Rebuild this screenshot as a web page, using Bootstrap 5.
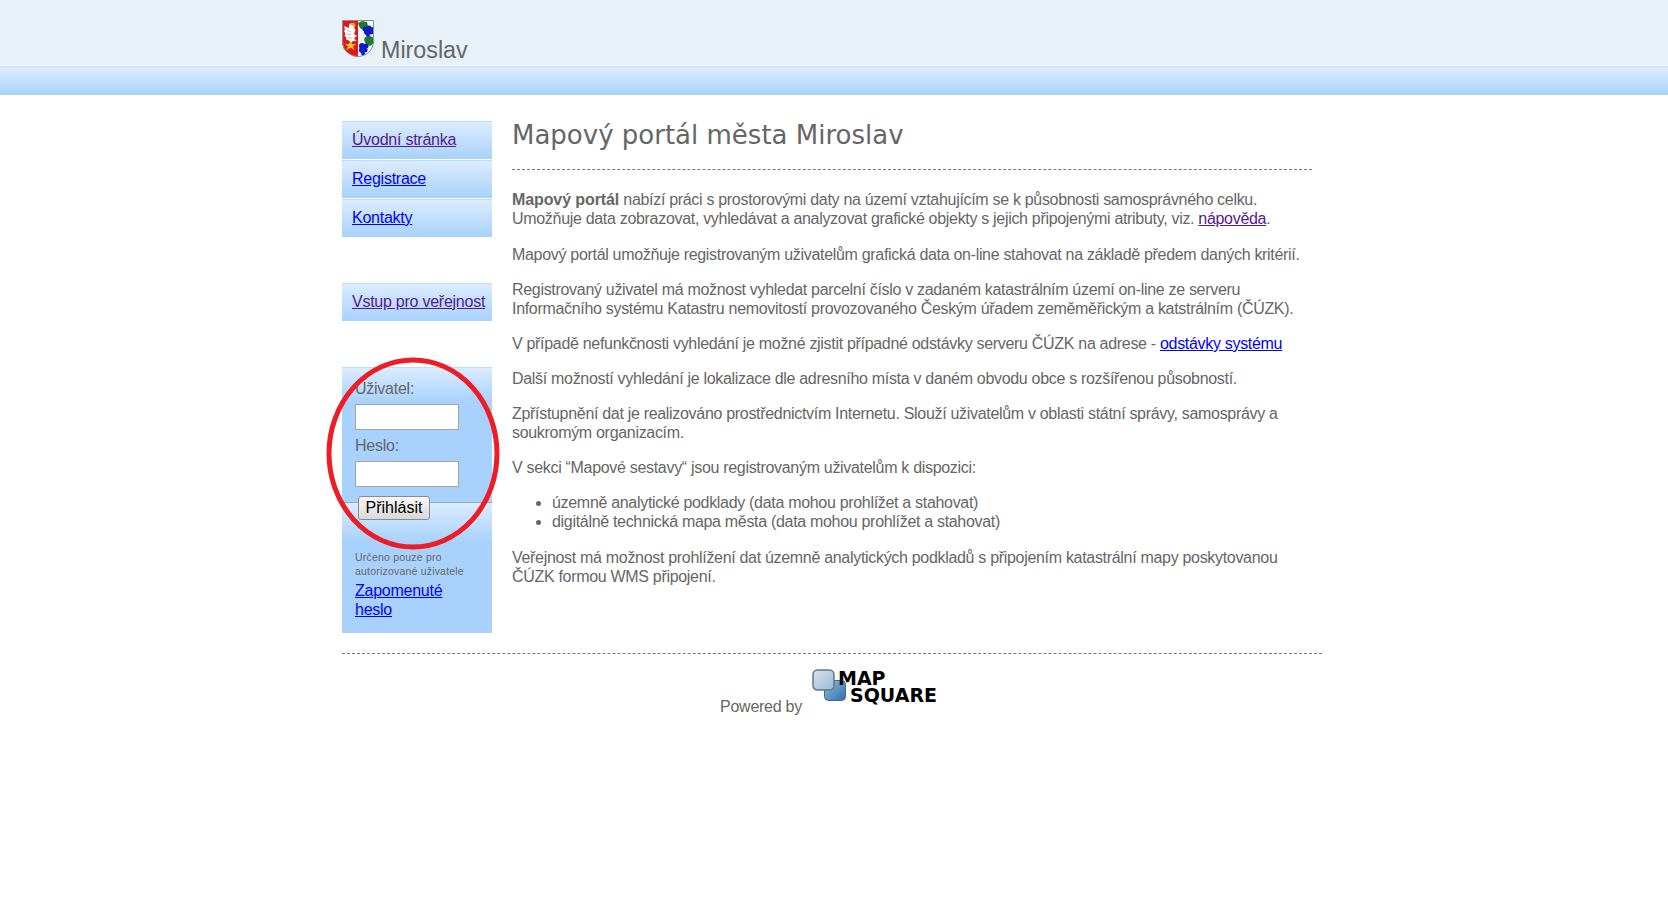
<!DOCTYPE html>
<html lang="cs">
<head>
  <meta charset="UTF-8" />
  <title>Mapový portál města Miroslav</title>
  <link href="https://cdn.jsdelivr.net/npm/bootstrap@5.3.0/dist/css/bootstrap.min.css" rel="stylesheet" />
  <style>
    body { font-family: "Liberation Sans", Arial, sans-serif; font-size: 16px; line-height: 19.2px; letter-spacing: -.25px; color: #666; background: #fff; }
    a { color: #00f; }
    a.seen { color: #551a8b; }
    .top-band { height: 66px; background: #e8f0f8; }
    .top-inner, .page-wrap { width: 984px; }
    .town-name { font-size: 23.300px; line-height: 26px; letter-spacing: 0; color: #666; margin-left: 7px; margin-bottom: 3px; }
    .crest { margin-top: 20px; margin-bottom: 9px; }
    .blue-band { height: 29px; border-top: 1px solid #bcdcfd; background: linear-gradient(#dcecfe, #a8d2fb); box-shadow: 0 -1px 0 #fff; }
    .page-wrap { padding-top: 26px; position: relative; }
    .side-col { width: 150px; }
    .side-link { display: block; height: 38px; margin-bottom: 1px; padding: 8px 0 0 10px; border-top: 1px solid #bcdcfd; background: linear-gradient(#dcecfe, #a8d2fb); white-space: nowrap; }
    .side-gap { margin-top: 46px; }
    .login-box { margin-top: 46px; height: 266px; padding: 11px 13px 0; background: linear-gradient(#dcecfe 0, #a8d2fd 34px, #a8d2fd 100%); border-top: 1px solid #bcdcfd; position: relative; }
    .login-lower { position: absolute; left: 0; right: 0; top: 134px; height: 40px; border-top: 1px solid #9aa6b2; background: linear-gradient(#dcecfe, #a8d2fd); }
    .login-body { position: relative; }
    .login-box label { display: block; margin: 0; }
    .login-box input[type=text] { display: block; width: 104px; height: 26px; margin: 6px 0; border: 1px solid #a5a5a5; background: #fff; padding: 0; }
    .login-btn { display: block; margin: 9px 0 0 3px; width: 72px; height: 24px; padding: 0; font-size: 16px; line-height: 20px; letter-spacing: 0; color: #000; background: linear-gradient(#f8f8f8, #d8d8d8); border: 1px solid #8a8a8a; border-radius: 3px; }
    .login-note { font-size: 10.5px; line-height: 14px; margin-top: 30px; letter-spacing: .2px; }
    .forgot { display: block; margin-top: 4px; line-height: 18.500px; }
    .main-col { width: 800px; margin-left: 20px; line-height: 19.100px; letter-spacing: -.31px; }
    .main-col strong { letter-spacing: -.1px; }
    .main-col h1 { font-family: "DejaVu Sans", Verdana, sans-serif; font-size: 26px; font-weight: 400; line-height: 32px; letter-spacing: 0; color: #666; margin: -2.500px 0 0; padding-bottom: 18.500px; border-bottom: 1px dashed #777; }
    .main-col h1 + p { margin-top: 20.400px; }
    .main-col p { margin: 0 0 16px; }
    .main-col ul { margin: 0 0 16px; padding-left: 40px; }
    .foot-line { margin-top: 20px; width: 980px; border-top: 1px dashed #777; }
    .foot-row { padding-top: 15px; padding-left: 378px; }
    .powered { padding-top: 28px; margin-right: 10px; }
    .ms-logo { position: relative; width: 125px; height: 38px; }
    .ms-word { position: absolute; font-family: "DejaVu Sans", Verdana, sans-serif; font-weight: 700; font-size: 19px; line-height: 20px; letter-spacing: 0; color: #000; }
    .red-ring { position: absolute; left: -17px; top: 260px; }
  </style>
</head>
<body>

<div class="top-band">
  <div class="top-inner mx-auto d-flex align-items-end">
    <svg class="crest" width="32" height="37" viewBox="0 0 32 37">
      <path d="M0 0H16V37C7 36 0 30 0 21Z" fill="#e8141c"/>
      <path d="M16 0H32V21C32 30 25 36 16 37Z" fill="#f4f6f4"/>
      <!-- eagle -->
      <path d="M13 5 L9 3 L7 5 L7 8 L2 6 L3 10 L2 11 L3.500 14 L2.500 15.500 L4.500 18 L4 19.500 L7 20.500 L9 23 L11 21 L14.500 21 L12 18 L15 16 L12 14 L13.500 10 L12 7.500Z" fill="#fff"/>
      <path d="M5 10 L9 12 M5 14 L9 15 M6 17.500 L10 18" stroke="#b8b8b8" stroke-width="1"/>
      <path d="M8 4 L12 2.500 L14 6 L10.500 5.500Z" fill="#f0a020"/>
      <!-- star -->
      <path d="M8.500 21 L10 24 L14 24 L11 26.300 L12.500 30 L8.500 27.800 L4.500 30 L6 26.300 L3 24 L7 24Z" fill="#e8c820"/>
      <!-- vine -->
      <path d="M16 3 L20 1 L25 2 L26 6 L23 10 L19 9 L17 6Z" fill="#1f7a2c"/>
      <path d="M23 17 L28 16 L32 18 L32 23 L28 26 L24 24 L22 20Z" fill="#1f7a2c"/>
      <g fill="#0a1ec8">
        <circle cx="23" cy="9" r="2.500"/><circle cx="27" cy="8" r="2.500"/><circle cx="30" cy="9" r="2"/>
        <circle cx="25" cy="12" r="3"/><circle cx="29" cy="12" r="2.500"/><circle cx="26" cy="15" r="2"/>
        <circle cx="20" cy="26" r="3"/><circle cx="24" cy="26" r="2.500"/><circle cx="20" cy="30" r="3"/>
        <circle cx="23" cy="30" r="2.500"/><circle cx="21" cy="33.500" r="2"/>
      </g>
      <path d="M.5 .5H31.500V21C31.500 30 25 36 16 36.500C7 36 .5 30 .5 21Z" fill="none" stroke="#8a9090" stroke-width="1"/>
    </svg>
    <div class="town-name">Miroslav</div>
  </div>
</div>
<div class="blue-band"></div>

<div class="page-wrap mx-auto">
  <div class="d-flex">
    <div class="side-col">
      <a class="side-link seen" href="#">Úvodní stránka</a>
      <a class="side-link" href="#">Registrace</a>
      <a class="side-link" href="#">Kontakty</a>
      <a class="side-link seen side-gap" href="#">Vstup pro veřejnost</a>
      <form class="login-box">
        <div class="login-lower"></div>
        <div class="login-body">
          <label for="uziv">Uživatel:</label>
          <input type="text" id="uziv" />
          <label for="heslo">Heslo:</label>
          <input type="text" id="heslo" />
          <button type="button" class="login-btn">Přihlásit</button>
          <div class="login-note">Určeno pouze pro autorizované uživatele</div>
          <a class="forgot" href="#">Zapomenuté heslo</a>
        </div>
      </form>
    </div>
    <div class="main-col">
      <h1>Mapový portál města Miroslav</h1>
      <p><strong>Mapový portál</strong> nabízí práci s prostorovými daty na území vztahujícím se k působnosti samosprávného celku. Umožňuje data zobrazovat, vyhledávat a analyzovat grafické objekty s jejich připojenými atributy, viz. <a class="seen" href="#">nápověda</a>.</p>
      <p>Mapový portál umožňuje registrovaným uživatelům grafická data on-line stahovat na základě předem daných kritérií.</p>
      <p>Registrovaný uživatel má možnost vyhledat parcelní číslo v zadaném katastrálním území on-line ze serveru Informačního systému Katastru nemovitostí provozovaného Českým úřadem zeměměřickým a katstrálním (ČÚZK).</p>
      <p>V případě nefunkčnosti vyhledání je možné zjistit případné odstávky serveru ČÚZK na adrese - <a href="#">odstávky systému</a></p>
      <p>Další možností vyhledání je lokalizace dle adresního místa v daném obvodu obce s rozšířenou působností.</p>
      <p>Zpřístupnění dat je realizováno prostřednictvím Internetu. Slouží uživatelům v oblasti státní správy, samosprávy a soukromým organizacím.</p>
      <p>V sekci “Mapové sestavy“ jsou registrovaným uživatelům k dispozici:</p>
      <ul>
        <li>územně analytické podklady (data mohou prohlížet a stahovat)</li>
        <li>digitálně technická mapa města (data mohou prohlížet a stahovat)</li>
      </ul>
      <p>Veřejnost má možnost prohlížení dat územně analytických podkladů s připojením katastrální mapy poskytovanou ČÚZK formou WMS připojení.</p>
    </div>
  </div>
  <div class="foot-line"></div>
  <div class="foot-row d-flex">
    <div class="powered">Powered by</div>
    <div class="ms-logo">
      <svg width="36" height="34" viewBox="0 0 36 34" class="position-absolute top-0 start-0">
        <defs>
          <linearGradient id="msBack" x1="0" y1="0" x2="1" y2="1"><stop offset="0" stop-color="#8fc0e4"/><stop offset="1" stop-color="#2f6fa8"/></linearGradient>
          <linearGradient id="msFront" x1="0" y1="0" x2="1" y2="1"><stop offset="0" stop-color="#d4e4f0"/><stop offset="1" stop-color="#9db8d0"/></linearGradient>
        </defs>
        <rect x="12.500" y="11.500" width="21" height="20" rx="4" fill="url(#msBack)" stroke="#3f6a94"/>
        <rect x="1" y="1" width="21" height="20" rx="4.500" fill="url(#msFront)" stroke="#5f7590" stroke-width="1.500"/>
      </svg>
      <span class="ms-word" style="left:26px;top:-1px">MAP</span>
      <span class="ms-word" style="left:38px;top:16px">SQUARE</span>
    </div>
  </div>
  <svg class="red-ring" width="176" height="198" viewBox="0 0 176 198">
    <ellipse cx="88" cy="98.500" rx="84" ry="93.500" fill="none" stroke="#ee1c25" stroke-width="5"/>
  </svg>
</div>

<script src="https://cdn.jsdelivr.net/npm/bootstrap@5.3.0/dist/js/bootstrap.bundle.min.js"></script>
</body>
</html>
